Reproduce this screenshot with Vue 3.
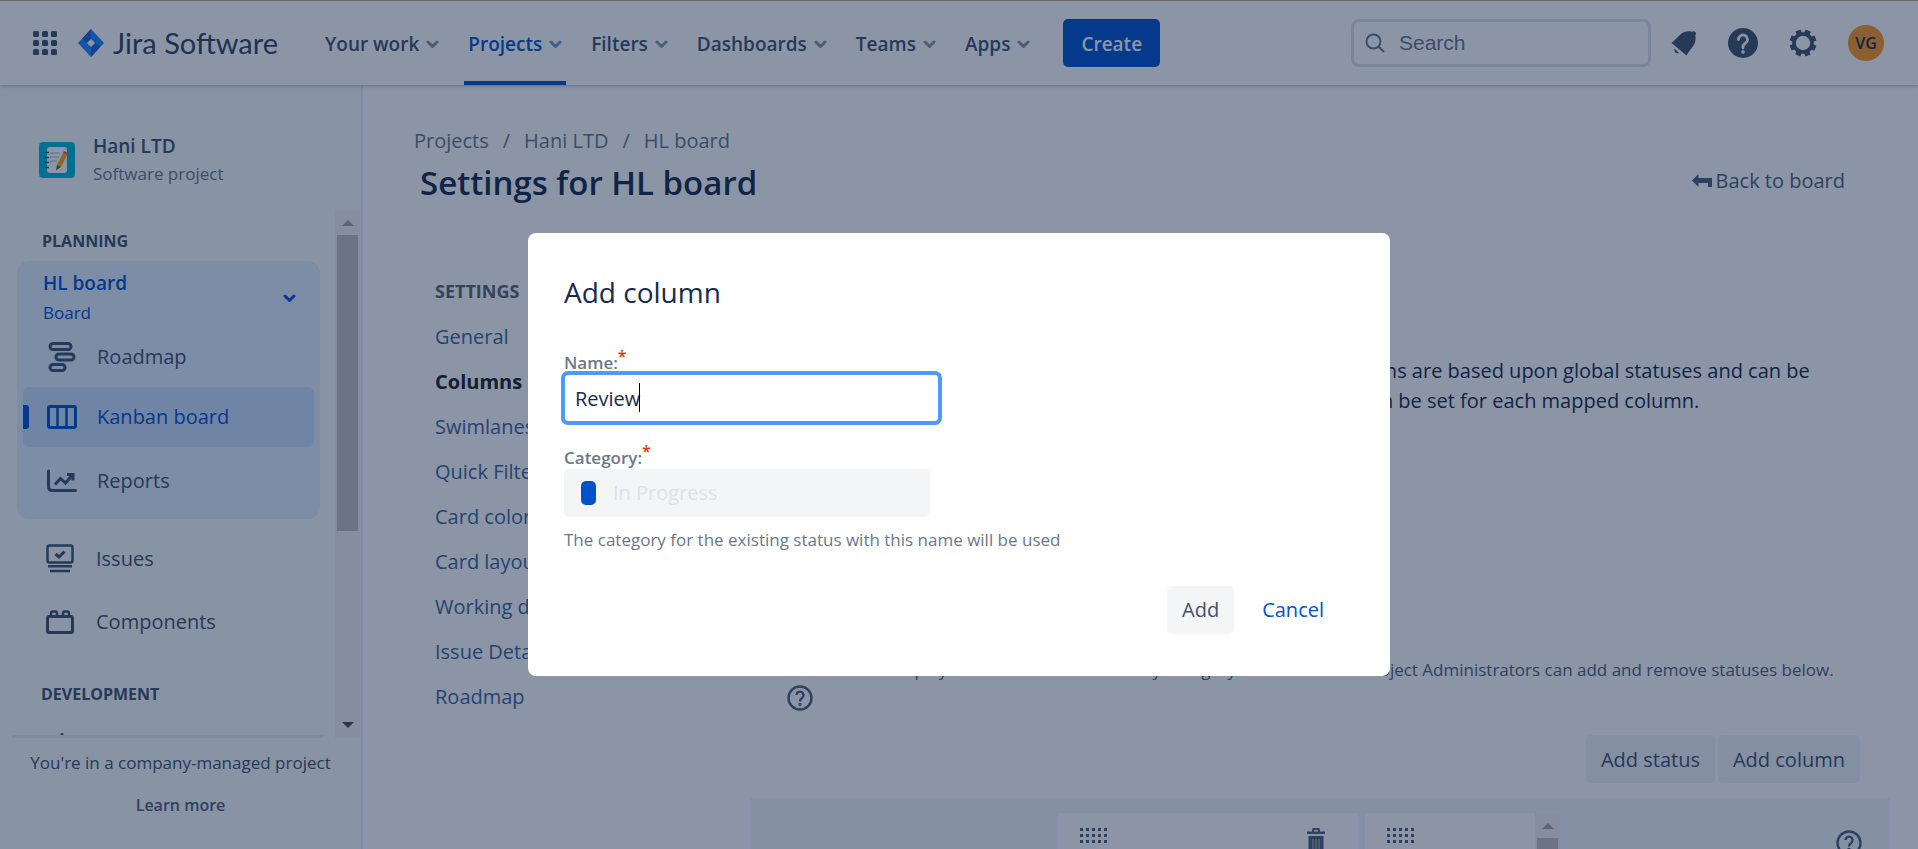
<script setup>
import { ref } from 'vue'

const topLinks = [
  { label: 'Your work' },
  { label: 'Projects', active: true },
  { label: 'Filters' },
  { label: 'Dashboards' },
  { label: 'Teams' },
  { label: 'Apps' }
]
const settings = [
  'General', 'Columns', 'Swimlanes', 'Quick Filters', 'Card colors',
  'Card layout', 'Working days', 'Issue Detail View', 'Roadmap'
]
const name = ref('Review')
const category = ref('In Progress')
</script>

<template>
  <div class="page">
    <header class="topbar">
      <button class="icon-btn switcher" aria-label="Switch apps">
        <svg width="24" height="24" viewBox="0 0 24 24" fill="currentColor">
          <template v-for="r in 3" :key="r">
            <rect v-for="c in 3" :key="c" :x="(c - 1) * 9" :y="(r - 1) * 9" width="6" height="6" rx="1.5" />
          </template>
        </svg>
      </button>
      <a href="#" class="brand">
        <svg width="26" height="28" viewBox="0 0 26 28">
          <path d="M13 0 26 14 13 28 0 14Z" fill="#2684ff" />
          <path d="M13 0v9.500L8.500 14 4 9.700Z" fill="#1764d8" />
          <path d="M13 28v-9.500l4.500-4.500 4.500 4.300Z" fill="#1764d8" />
          <path d="M13 10 17 14 13 18 9 14Z" fill="#fff" />
        </svg>
        <span>Jira Software</span>
      </a>
      <nav class="top-nav">
        <a v-for="l in topLinks" :key="l.label" href="#" :class="{ active: l.active }">
          {{ l.label }}
          <svg width="13" height="9" viewBox="0 0 13 9" fill="none" stroke="currentColor" stroke-width="3" stroke-linecap="round" stroke-linejoin="round"><path d="M2 2l4.500 4.500L11 2" /></svg>
        </a>
      </nav>
      <button class="create">Create</button>
      <label class="search">
        <svg width="20" height="20" viewBox="0 0 20 20" fill="none" stroke="currentColor" stroke-width="2" stroke-linecap="round"><circle cx="8.500" cy="8.500" r="7" /><path d="M13.500 13.500 18.500 18.500" /></svg>
        <input type="search" placeholder="Search" aria-label="Search" />
      </label>
      <div class="tools">
        <button class="icon-btn" aria-label="Notifications">
          <svg width="26" height="26" viewBox="0 0 26 26" fill="currentColor"><path d="M0.500 13C5 9.500 9 3.500 13.500 2c2.500-.8 5-.8 7.500-.2 1-.8 2.800-.7 3.500.4.800 1.300.2 2.500-.2 3.200.7 3.300.4 6.300-1.300 9.300-2.200 3.700-5.500 7-7.500 10.800Z" /><path d="M3.500 18.500l4.500 4.500c-2.600 1.300-5.500-1.700-4.500-4.500Z" /></svg>
        </button>
        <button class="icon-btn" aria-label="Help">
          <svg width="30" height="30" viewBox="0 0 30 30"><circle cx="15" cy="15" r="15" fill="currentColor" /><path d="M10.500 11.500a4.500 4.500 0 1 1 7 3.700c-1.700 1-2.500 1.800-2.500 3.800v1" fill="none" stroke="#fff" stroke-width="2.800" stroke-linecap="round" /><circle cx="15" cy="24" r="1.800" fill="#fff" /></svg>
        </button>
        <button class="icon-btn" aria-label="Settings">
          <svg width="28" height="28" viewBox="0 0 28 28" fill="none" stroke="currentColor"><circle cx="14" cy="14" r="9" stroke-width="3.600" /><g stroke-width="5.500"><path v-for="a in 8" :key="a" d="M14 0.600v4" :transform="`rotate(${a * 45 - 22} 14 14)`" /></g></svg>
        </button>
        <button class="avatar" aria-label="Your profile">VG</button>
      </div>
    </header>

    <div class="shell">
      <aside class="sidebar">
        <div class="project">
          <svg width="36" height="36" viewBox="0 0 36 36">
            <rect width="36" height="36" rx="4" fill="#00b8d9" />
            <rect x="8" y="5" width="20" height="26" rx="3" fill="#fff" />
            <path d="M11 11h10M11 15h9M11 19h7" stroke="#a5b4cf" stroke-width="1" />
            <path d="M6 10.500h4M6 15.500h4M6 20.500h4M6 25.500h4" stroke="#344563" stroke-width="1.500" />
            <path d="M24 11l4 2-6 12-4 2v-4Z" fill="#ffab00" />
            <path d="M24 11l1-2 4 2-1 2Z" fill="#ff5630" />
            <path d="M18 23l3.500 2L17 28.500Z" fill="#505f79" />
          </svg>
          <div>
            <div class="project-name">Hani LTD</div>
            <div class="project-kind">Software project</div>
          </div>
        </div>

        <div class="menu">
          <div class="menu-content">
            <h2>Planning</h2>
            <div class="board-group">
              <button class="board-head">
                <span><strong>HL board</strong><small>Board</small></span>
                <svg width="13" height="9" viewBox="0 0 13 9" fill="none" stroke="currentColor" stroke-width="3" stroke-linecap="round" stroke-linejoin="round"><path d="M2 2l4.500 4.500L11 2" /></svg>
              </button>
              <a href="#" class="item roadmap">
                <svg width="30" height="30" viewBox="0 0 30 30" fill="none" stroke="currentColor" stroke-width="3"><rect x="3" y="1.500" width="21" height="6" rx="3" /><rect x="9" y="12" width="18" height="6" rx="3" /><rect x="3" y="22.500" width="15" height="6" rx="3" /></svg>
                Roadmap
              </a>
              <a href="#" class="item selected">
                <svg width="30" height="24" viewBox="0 0 30 24" fill="none" stroke="currentColor" stroke-width="3"><rect x="1.500" y="1.500" width="27" height="21" rx="1.500" /><path d="M10.500 2v20M19.500 2v20" stroke-width="2.500" /></svg>
                Kanban board
              </a>
              <a href="#" class="item reports">
                <svg width="30" height="24" viewBox="0 0 30 24" fill="none" stroke="currentColor" stroke-width="3" stroke-linecap="round" stroke-linejoin="round"><path d="M1.500 2v15.500q0 4 4 4h23" /><path d="M8 15.500l5.500-6 5 4.500 7-8M20 5.500h6v6" stroke-linecap="butt" stroke-linejoin="miter" /></svg>
                Reports
              </a>
            </div>
            <a href="#" class="item outer">
              <svg width="28" height="29" viewBox="0 0 28 29" fill="none" stroke="currentColor" stroke-width="2.500"><rect x="1.500" y="1.500" width="25" height="17" rx="2" /><path d="M9.500 10l3.500 3 5.500-5.500" stroke-width="3" /><path d="M2 22.200h24M4 27h20" /></svg>
              Issues
            </a>
            <a href="#" class="item outer">
              <svg width="28" height="24" viewBox="0 0 28 24" fill="none" stroke="currentColor" stroke-width="3"><rect x="1.500" y="6.500" width="25" height="16" rx="1.500" /><path d="M5 6V3.500Q5 1.500 7 1.500h2q2 0 2 2V6M17 6V3.500q0-2 2-2h2q2 0 2 2V6" stroke-width="2.500" /></svg>
              Components
            </a>
            <h2 class="dev">Development</h2>
            <a href="#" class="item code" aria-label="Code">
              <svg width="28" height="24" viewBox="0 0 28 24" fill="none" stroke="currentColor" stroke-width="3" stroke-linecap="round"><path d="M7 4 2 12l5 8M16 1.500 11 22M21 4l5 8-5 8" /></svg>
            </a>
          </div>
          <div class="scrollbar"><i class="up"></i><b class="thumb"></b><i class="down"></i></div>
        </div>

        <footer class="side-foot">
          <p>You're in a company-managed project</p>
          <a href="#">Learn more</a>
        </footer>
      </aside>

      <main class="main">
        <nav class="crumbs" aria-label="Breadcrumb">
          <a href="#">Projects</a><span>/</span><a href="#">Hani LTD</a><span>/</span><a href="#">HL board</a>
        </nav>
        <div class="title-row">
          <h1>Settings for HL board</h1>
          <a href="#" class="back">
            <svg width="20" height="14" viewBox="0 0 20 14" fill="currentColor"><path d="M0 6.500 6.500 0v4H20v9h-4V9H6.500v4Z" /></svg>
            Back to board
          </a>
        </div>
        <div class="body">
          <nav class="settings">
            <h2>Settings</h2>
            <a v-for="s in settings" :key="s" href="#" :class="{ current: s === 'Columns' }">{{ s }}</a>
          </nav>
          <section class="content">
            <p class="intro">Columns can be added, removed, reordered and renamed. Columns are based upon global statuses and can be<br />moved between columns. Minimum and maximum constraints can be set for each mapped column.</p>
            <p class="note">Columns will display statuses from workflow by Category rules and limit. Project Administrators can add and remove statuses below.</p>
            <button class="help" aria-label="Workflow help">
              <svg width="26" height="26" viewBox="0 0 26 26" fill="none" stroke="currentColor" stroke-width="2.400"><circle cx="13" cy="13" r="11.500" /><path d="M9.500 10a3.500 3.500 0 1 1 5.500 3c-1.500 1-2 1.500-2 3.500" /><circle cx="13" cy="19.500" r=".6" /></svg>
            </button>
            <div class="actions">
              <button>Add status</button>
              <button>Add column</button>
            </div>
            <div class="columns">
              <div class="col first">
                <svg class="grip" width="28" height="16" viewBox="0 0 28 16" fill="currentColor"><template v-for="r in 3" :key="r"><rect v-for="c in 5" :key="c" :x="(c - 1) * 6" :y="(r - 1) * 6" width="3" height="3" /></template></svg>
                <button class="icon-btn dark" aria-label="Delete column">
                  <svg width="18" height="22" viewBox="0 0 18 22"><path d="M0 3.500h5V2q0-2 2-2h4q2 0 2 2v1.500h5V6H0ZM7 2v1.500h4V2Z" fill="currentColor" fill-rule="evenodd" /><path d="M1.500 8h15v14h-15Z" fill="currentColor" /><path d="M6 11v11M9 11v11M12 11v11" stroke="#c1c7d0" stroke-width="1" /></svg>
                </button>
              </div>
              <div class="col second">
                <svg class="grip" width="28" height="16" viewBox="0 0 28 16" fill="currentColor"><template v-for="r in 3" :key="r"><rect v-for="c in 5" :key="c" :x="(c - 1) * 6" :y="(r - 1) * 6" width="3" height="3" /></template></svg>
              </div>
              <div class="scrollbar"><i class="up"></i><b class="thumb"></b></div>
              <button class="help right" aria-label="Column help">
                <svg width="26" height="26" viewBox="0 0 26 26" fill="none" stroke="currentColor" stroke-width="2.400"><circle cx="13" cy="13" r="11.500" /><path d="M9.500 10a3.500 3.500 0 1 1 5.500 3c-1.500 1-2 1.500-2 3.500" /><circle cx="13" cy="19.500" r=".6" /></svg>
              </button>
            </div>
          </section>
        </div>
      </main>
    </div>

    <div class="blanket">
      <form class="modal" role="dialog" aria-modal="true" aria-labelledby="dialog-title" @submit.prevent>
        <h2 id="dialog-title">Add column</h2>
        <label for="col-name">Name:<sup>*</sup></label>
        <div class="name-field">
          <input id="col-name" v-model="name" type="text" autocomplete="off" spellcheck="false" />
          <i class="caret"></i>
        </div>
        <label for="col-cat">Category:<sup>*</sup></label>
        <div class="cat-field">
          <i class="swatch"></i>
          <select id="col-cat" v-model="category" disabled>
            <option>In Progress</option>
          </select>
        </div>
        <p>The category for the existing status with this name will be used</p>
        <div class="modal-actions">
          <button class="add">Add</button>
          <button type="button" class="cancel">Cancel</button>
        </div>
      </form>
    </div>
  </div>
</template>

<style>
html, body { margin: 0; overflow: hidden; }
</style>

<style scoped>
* { box-sizing: border-box; }
.page {
  --ink: #172b4d;
  --text: #42526e;
  --muted: #6b778c;
  --blue: #0052cc;
  height: 100vh;
  display: flex;
  flex-direction: column;
  overflow: hidden;
  background: #fff;
  color: var(--ink);
  font-family: "Open Sans", "Noto Sans", sans-serif;
  font-size: 20px;
  line-height: 30px;
}
a { color: inherit; text-decoration: none; }
button, input, select { font: inherit; color: inherit; margin: 0; }
button { border: 0; background: none; padding: 0; cursor: pointer; }
h1, h2, p { margin: 0; }
svg { display: block; flex: none; }

.topbar {
  flex: none;
  position: relative;
  height: 85px;
  display: flex;
  align-items: center;
  padding: 0 34px 0 33px;
  border-top: 1px solid #c8aa8c;
  background: #fff;
  box-shadow: 0 1px 2px rgba(9, 30, 66, .2), 0 2px 6px rgba(9, 30, 66, .12);
}
.icon-btn { color: var(--text); }
.switcher { margin-right: 21px; }
.brand { display: flex; align-items: center; gap: 9px; color: #344563; font-family: Lato, sans-serif; font-size: 29px; }
.top-nav { display: flex; align-self: stretch; gap: 21px; margin-left: 43px; color: var(--text); font-size: 19px; font-weight: 600; }
.top-nav a { display: flex; align-items: center; gap: 7px; padding: 2px 4px 0; border-top: 4px solid transparent; border-bottom: 4px solid transparent; }
.top-nav svg { opacity: .6; }
.top-nav a.active { color: var(--blue); border-bottom-color: var(--blue); }
.create { height: 48px; margin-left: 29px; padding: 2px 18px 0; border-radius: 5px; background: var(--blue); color: #fff; font-size: 19px; font-weight: 600; }
.search { flex: 0 1 300px; min-width: 0; height: 48px; margin-left: auto; display: flex; align-items: center; gap: 14px; padding: 0 11px; border: 3px solid #dfe1e6; border-radius: 8px; color: var(--muted); }
.search input { flex: 1; width: 100%; min-width: 0; border: 0; padding: 0; background: none; outline: 0; font-family: "Liberation Sans", Arial, sans-serif; font-size: 21px; }
.search input::placeholder { color: var(--muted); opacity: 1; }
.tools { display: flex; align-items: center; gap: 31px; margin-left: 20px; }
.avatar { width: 36px; height: 36px; border-radius: 50%; background: #ff991f; color: var(--ink); font-size: 16px; font-weight: 600; }

.shell { flex: 1; min-height: 0; display: flex; }
.sidebar { flex: none; width: 363px; display: flex; flex-direction: column; background: #fafbfc; border-right: 2px solid #ebecf0; color: var(--text); }
.project { display: flex; gap: 18px; align-items: center; padding: 54px 20px 29px 39px; line-height: 28px; }
.project > div { height: 42px; display: flex; flex-direction: column; justify-content: center; }
.project-name { font-size: 19px; font-weight: 600; }
.project-kind { color: var(--muted); font-size: 17px; }
.menu { flex: 1; min-height: 0; display: flex; justify-content: space-between; padding-right: 1px; }
.menu-content { width: 323px; overflow: hidden; padding: 15px 3px 0 17px; position: relative; }
.menu-content::after { content: ""; position: absolute; left: 12px; right: 0; bottom: 0; height: 3px; background: #ebecf0; }
.menu h2 { padding-left: 25px; font-size: 16px; font-weight: 700; line-height: 32px; text-transform: uppercase; }
.board-group { margin-top: 4px; height: 258px; border-radius: 12px; background: #e6f0ff; }
.board-head { display: flex; width: 100%; align-items: center; justify-content: space-between; padding: 8px 24px 0 26px; color: var(--blue); text-align: left; }
.board-head strong, .board-head small { display: block; line-height: 29px; }
.board-head strong { font-size: 19px; font-weight: 600; }
.board-head small { font-size: 17px; }
.item { display: flex; align-items: center; height: 60px; margin: 0 6px; padding-left: 24px; gap: 20px; }
.item.selected { position: relative; border-radius: 6px; background: #cce0ff; color: var(--blue); }
.item.selected::before { content: ""; position: absolute; left: 0; top: 18px; width: 6px; height: 24px; border-radius: 0 3px 3px 0; background: var(--blue); }
.item.reports { height: 68px; }
.item.outer { height: 63px; margin: 0; padding-left: 29px; gap: 22px; }
.board-group + .outer { margin-top: 8px; }
.menu h2.dev { padding-left: 24px; margin-top: 25px; }
.item.code { margin: 23px 0 0; padding-left: 29px; align-items: flex-start; }
.scrollbar { flex: none; width: 25px; display: flex; flex-direction: column; align-items: center; background: #f1f1f1; }
.scrollbar i { width: 0; height: 0; border: 6px solid transparent; }
.scrollbar .up { margin: 4px 0 9px; border-bottom-color: #a3a3a3; }
.scrollbar .down { margin: auto 0 4px; border-top-color: #505050; }
.scrollbar .thumb { width: 21px; height: 296px; background: #c1c1c1; }
.side-foot { height: 111px; padding-top: 10px; text-align: center; font-size: 17px; }
.side-foot a { display: block; margin-top: 12px; font-size: 16px; font-weight: 600; color: #505f79; }

.main { flex: 1; min-width: 0; display: flex; flex-direction: column; padding: 41px 28px 0 51px; }
.crumbs { display: flex; gap: 14px; color: var(--muted); }
.title-row { display: flex; align-items: center; justify-content: space-between; padding: 5px 45px 0 6px; }
.title-row h1 { font-size: 33px; font-weight: 600; line-height: 44px; }
.back { display: flex; align-items: center; gap: 4px; padding-bottom: 5px; color: #505f79; }
.body { display: flex; margin-top: 64px; padding-left: 21px; }
.settings { flex: none; width: 315px; color: #3e6797; line-height: 45px; }
.settings h2 { color: #5e6470; font-size: 18px; font-weight: 700; line-height: 45px; text-transform: uppercase; }
.settings a { display: block; }
.settings .current { color: #202124; font-weight: 700; }
.content { flex: 1; min-width: 0; }
.intro { margin: 87px 0 0 21px; white-space: nowrap; }
.note { margin: 240px 0 0 37px; color: #505f79; font-size: 17px; line-height: 28px; white-space: nowrap; }
.help { display: block; margin: 1px 0 0 37px; color: #505f79; }
.actions { display: flex; justify-content: flex-end; gap: 3px; margin: 24px 30px 0 0; }
.actions button { height: 48px; padding: 1px 15px 0; border-radius: 5px; background: #f3f4f8; color: var(--text); }
.columns { display: flex; height: 80px; margin-top: 15px; padding: 15px 28px 0 308px; background: #f4f5f7; }
.col { display: flex; justify-content: space-between; align-items: flex-start; padding: 15px 33px 0 22px; background: #fff; }
.col.first { width: 300px; margin-right: 7px; }
.col.second { width: 170px; }
.grip, .dark { color: #505f79; }
.help.right { align-self: flex-start; margin: 17px 0 0 auto; }

.blanket { position: fixed; inset: 0; display: flex; align-items: flex-start; justify-content: center; padding-top: 233px; background: rgba(9, 30, 66, .47); }
.modal { width: 45%; min-width: 640px; max-width: 862px; padding: 37px 54px 42px 36px; border-radius: 8px; background: #fff; }
.modal h2 { font-size: 28px; font-weight: 400; line-height: 44px; margin-bottom: 33px; }
.modal label { display: block; height: 24px; color: var(--muted); font-size: 17px; font-weight: 600; line-height: 32px; }
.modal sup { color: #de350b; font-size: 16px; line-height: 0; }
.name-field { position: relative; width: 381px; margin: 0 0 17px -3px; }
.name-field input { display: block; width: 100%; height: 54px; padding: 0 10px; border: 4px solid #4c9aff; border-radius: 7px; background: #fff; outline: 0; }
.caret { position: absolute; left: 78px; top: 12px; width: 1px; height: 29px; background: #000; }
.cat-field { position: relative; width: 366px; margin-top: 3px; }
.cat-field select { display: block; width: 100%; height: 48px; padding: 0 49px; border: 0; border-radius: 5px; background: #f4f5f7; color: #dfe1e6; opacity: 1; appearance: none; }
.swatch { position: absolute; left: 17px; top: 12px; width: 15px; height: 24px; border-radius: 5px; background: var(--blue); }
.modal p { margin-top: 8px; color: var(--muted); font-size: 17px; }
.modal-actions { display: flex; justify-content: flex-end; gap: 16px; margin-top: 31px; }
.modal-actions button { height: 48px; padding: 0 15px; border-radius: 5px; }
.modal-actions .add { background: #f4f5f7; color: var(--text); }
.modal-actions .cancel { padding: 0 12px; color: var(--blue); }
</style>
